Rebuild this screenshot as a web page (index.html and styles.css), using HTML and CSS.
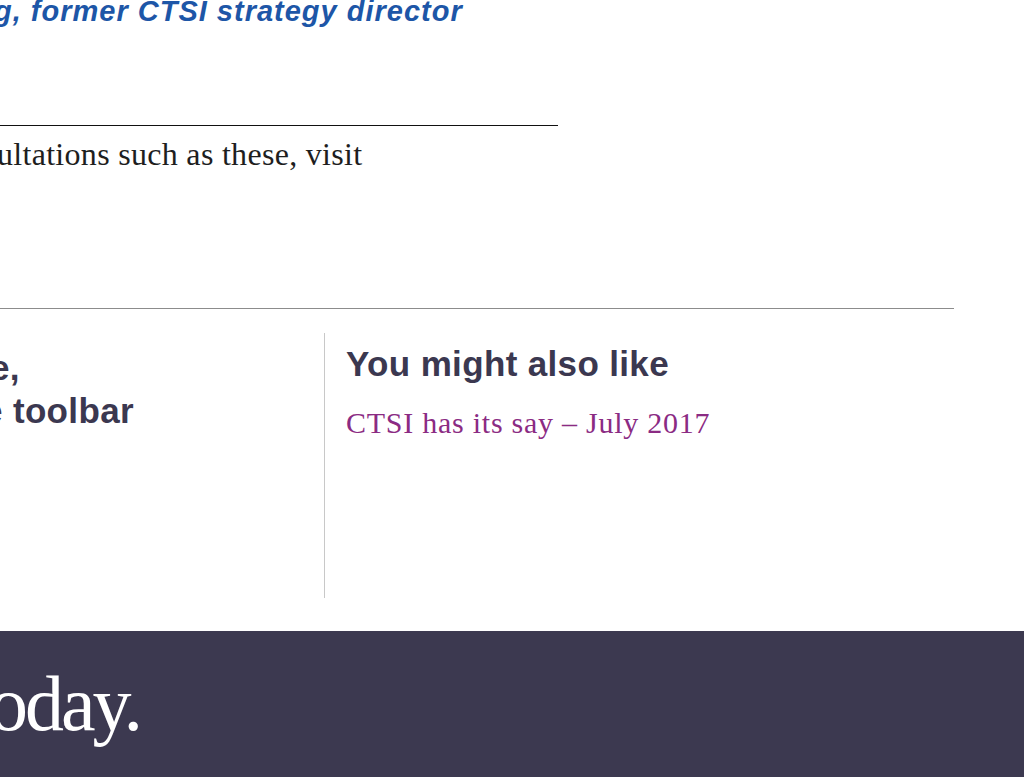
FILE: index.html
```html
<!DOCTYPE html>
<html lang="en">
<head>
<meta charset="utf-8">
<title>You might also like</title>
<link rel="stylesheet" href="styles.css">
</head>
<body>
<main class="page">
  <article class="article">
    <p class="cite"><span class="cut cut-cite">g, former CTSI strategy director</span></p>
    <hr class="rule-black">
    <p class="body-text"><span class="cut cut-body">ultations such as these, visit</span></p>
  </article>
  <section class="related">
    <div class="col col-left">
      <h2 class="share-title"><span class="cut cut-e1">e,</span><br><span class="cut cut-e2">e toolbar</span></h2>
    </div>
    <div class="col col-right">
      <h2 class="related-title">You might also like</h2>
      <a class="related-link" href="#">CTSI has its say – July 2017</a>
    </div>
  </section>
</main>
<footer class="footer">
  <span class="logo"><span class="cut cut-logo">oday.</span></span>
</footer>
</body>
</html>
```
FILE: styles.css
```css
html, body {
  margin: 0;
  padding: 0;
  background: #ffffff;
  overflow: hidden;
}
body {
  width: 1024px;
  height: 777px;
}
.page {
  display: flex;
  flex-direction: column;
}
.cut {
  display: inline-block;
  white-space: nowrap;
}
.article {
  width: 558px;
}
.cite {
  margin: -6px 0 0 0;
  font-family: "Liberation Sans", Arial, sans-serif;
  font-weight: bold;
  font-style: italic;
  font-size: 29px;
  letter-spacing: 1px;
  line-height: 34px;
  color: #1d56a7;
}
.cut-cite { margin-left: -6px; }
.rule-black {
  margin: 97px 0 0 0;
  border: 0;
  border-top: 1px solid #111111;
  height: 0;
}
.body-text {
  margin: 8px 0 0 0;
  font-family: "Liberation Serif", "Times New Roman", serif;
  font-size: 32px;
  letter-spacing: 0.3px;
  line-height: 40px;
  color: #1e1e1e;
}
.cut-body { margin-left: -3px; }
.related {
  margin-top: 134px;
  width: 954px;
  border-top: 1px solid #8c8c8c;
  padding-top: 24px;
  display: flex;
}
.col {
  height: 265px;
  box-sizing: border-box;
}
.col-left {
  width: 325px;
  border-right: 1px solid #c8c8c8;
  padding-top: 13px;
}
.col-right {
  flex: 1;
  padding: 11px 0 0 21px;
}
.share-title, .related-title {
  margin: 0;
  font-family: "Liberation Sans", Arial, sans-serif;
  font-weight: bold;
  font-size: 35px;
  letter-spacing: 0.35px;
  color: #3b3850;
}
.share-title { line-height: 43px; }
.cut-e1 { margin-left: -10px; }
.cut-e2 { margin-left: -17px; }
.related-title {
  line-height: 40px;
}
.related-link {
  display: block;
  margin-top: 21px;
  font-family: "Liberation Serif", "Times New Roman", serif;
  font-size: 30px;
  letter-spacing: 0.75px;
  line-height: 36px;
  color: #8b2b83;
  text-decoration: none;
}
.footer {
  margin-top: 33px;
  background: #3c3950;
  height: 160px;
  padding-top: 34px;
  box-sizing: border-box;
}
.logo {
  display: block;
  font-family: "Liberation Serif", "Times New Roman", serif;
  font-size: 78px;
  line-height: 78px;
  color: #ffffff;
  letter-spacing: -3px;
}
.cut-logo { margin-left: -11px; }
```
